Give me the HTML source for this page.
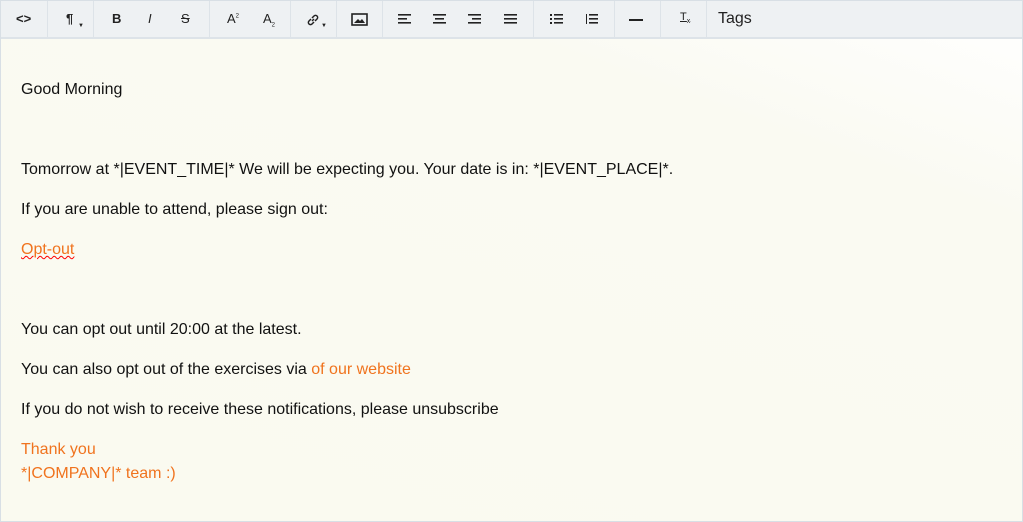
<!DOCTYPE html><html><head><style>
body{margin:0;width:1023px;height:522px;overflow:hidden;font-family:"Liberation Sans",sans-serif;}
.wrap{position:absolute;left:0;top:0;width:1021px;height:520px;border:1px solid #d8dfe5;background:linear-gradient(200deg,#ffffff 0%,#fafaf2 25%,#fafaf0 100%);}
.tb{position:absolute;left:0;top:0;width:1021px;height:36px;background:#eef1f3;border-bottom:2px solid #dde3e8;}
.sep{position:absolute;top:0;width:1px;height:36px;background:#dde3e8;}
.ic{position:absolute;top:10px;font-size:13px;color:#222;font-weight:bold;}
.txt{position:absolute;left:20px;font-size:16px;color:#111;}
.o{color:#f0731e}
</style></head><body><div class="wrap">
<div class="tb">
<div class="sep" style="left:46px"></div><div class="sep" style="left:92px"></div><div class="sep" style="left:208px"></div><div class="sep" style="left:289px"></div><div class="sep" style="left:335px"></div><div class="sep" style="left:381px"></div><div class="sep" style="left:532px"></div><div class="sep" style="left:613px"></div><div class="sep" style="left:659px"></div><div class="sep" style="left:705px"></div>
<span class="ic" style="left:15px">&lt;&gt;</span>
<span class="ic" style="left:65px">¶</span><span class="ic" style="left:77px;top:22px;font-size:6px">▼</span>
<span class="ic" style="left:111px">B</span>
<span class="ic" style="left:147px;font-style:italic;font-weight:normal">I</span>
<span class="ic" style="left:180px;text-decoration:line-through;font-weight:normal">S</span>
<span class="ic" style="left:226px;font-weight:normal">A<sup style="font-size:6px">2</sup></span>
<span class="ic" style="left:262px;font-weight:normal">A<sub style="font-size:6px">2</sub></span>
<svg style="position:absolute;left:305px;top:12px" width="14" height="14" viewBox="0 0 14 14" fill="none" stroke="#222" stroke-width="1.5"><path d="M6 8l2-2M5 6L3 8a2 2 0 0 0 3 3l2-2M9 8l2-2a2 2 0 0 0-3-3L6 5"/></svg><span class="ic" style="left:320px;top:22px;font-size:6px">▼</span>
<svg style="position:absolute;left:350px;top:12px" width="17" height="13"><rect x="1" y="1" width="15" height="11" fill="none" stroke="#222" stroke-width="1.6"/><path d="M3 10l4-4 2 2 2-2 3 4z" fill="#222"/></svg>
<svg style="position:absolute;left:397px;top:12px" width="130" height="12" fill="#222"><rect x="0" y="1" width="13" height="1.6"/><rect x="0" y="5" width="9" height="1.6"/><rect x="0" y="9" width="13" height="1.6"/><rect x="35" y="1" width="13" height="1.6"/><rect x="37" y="5" width="9" height="1.6"/><rect x="35" y="9" width="13" height="1.6"/><rect x="70" y="1" width="13" height="1.6"/><rect x="74" y="5" width="9" height="1.6"/><rect x="70" y="9" width="13" height="1.6"/><rect x="106" y="1" width="13" height="1.6"/><rect x="106" y="5" width="13" height="1.6"/><rect x="106" y="9" width="13" height="1.6"/></svg>
<svg style="position:absolute;left:549px;top:12px" width="50" height="12" fill="#222"><rect x="0" y="1" width="2" height="2"/><rect x="0" y="5" width="2" height="2"/><rect x="0" y="9" width="2" height="2"/><rect x="4" y="1" width="9" height="1.6"/><rect x="4" y="5" width="9" height="1.6"/><rect x="4" y="9" width="9" height="1.6"/><rect x="36" y="1" width="1" height="10"/><rect x="39" y="1" width="9" height="1.6"/><rect x="39" y="5" width="9" height="1.6"/><rect x="39" y="9" width="9" height="1.6"/></svg>
<div style="position:absolute;left:628px;top:18px;width:14px;height:2px;background:#222"></div>
<span class="ic" style="left:679px;font-size:11px;text-decoration:underline;font-weight:normal">T<sub style="font-size:7px">x</sub></span>
<span style="position:absolute;left:717px;top:9px;font-size:16px;color:#222">Tags</span>
</div>
<div class="txt" style="top:80px">Good Morning</div>
<div class="txt" style="top:160px">Tomorrow at *|EVENT_TIME|* We will be expecting you. Your date is in: *|EVENT_PLACE|*.</div>
<div class="txt" style="top:200px">If you are unable to attend, please sign out:</div>
<div class="txt o" style="top:240px;text-decoration:underline wavy red;text-decoration-thickness:1px">Opt-out</div>
<div class="txt" style="top:320px">You can opt out until 20:00 at the latest.</div>
<div class="txt" style="top:360px">You can also opt out of the exercises via <span class="o">of our website</span></div>
<div class="txt" style="top:400px">If you do not wish to receive these notifications, please unsubscribe</div>
<div class="txt o" style="top:440px">Thank you</div>
<div class="txt o" style="top:464px">*|COMPANY|* team :)</div>
</div></body></html>
